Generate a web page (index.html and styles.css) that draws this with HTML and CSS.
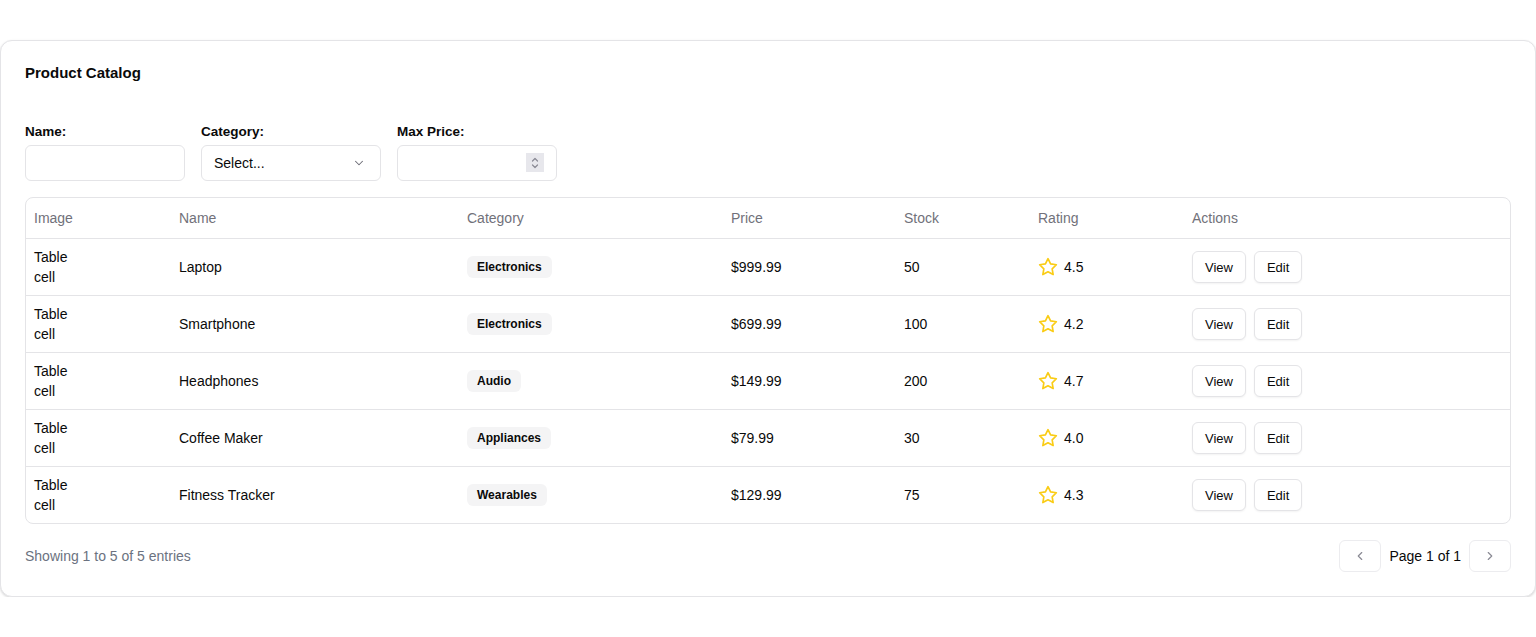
FILE: index.html
```html
<!DOCTYPE html>
<html lang="en">
<head>
<meta charset="utf-8">
<title>Product Catalog</title>
<link rel="stylesheet" href="styles.css">
</head>
<body>
<div class="card">
  <h2 class="title">Product Catalog</h2>
  <div class="filters">
    <div class="field">
      <label class="label">Name:</label>
      <input class="input w-name" type="text">
    </div>
    <div class="field">
      <label class="label">Category:</label>
      <div class="input select">
        <span>Select...</span>
        <svg class="chev" width="14" height="14" viewBox="0 0 24 24" fill="none" stroke="#6b6b75" stroke-width="1.8" stroke-linecap="round" stroke-linejoin="round"><path d="M6 9l6 6 6-6"/></svg>
      </div>
    </div>
    <div class="field">
      <label class="label">Max Price:</label>
      <div class="num-wrap">
        <input class="input w-price" type="text">
        <span class="spinner">
          <svg width="10" height="16" viewBox="0 0 10 16" fill="none" stroke="#8a8a94" stroke-width="1.2" stroke-linecap="round" stroke-linejoin="round"><path d="M2.5 6L5 3.5 7.5 6"/><path d="M2.5 10L5 12.5 7.5 10"/></svg>
        </span>
      </div>
    </div>
  </div>

  <div class="table-box">
    <table class="table">
      <colgroup>
        <col class="c-img"><col class="c-name"><col class="c-cat"><col class="c-price"><col class="c-stock"><col class="c-rating"><col>
      </colgroup>
      <thead>
        <tr><th>Image</th><th>Name</th><th>Category</th><th>Price</th><th>Stock</th><th>Rating</th><th>Actions</th></tr>
      </thead>
      <tbody>
        <tr>
          <td><div class="imgcell">Table cell</div></td><td>Laptop</td><td><span class="badge">Electronics</span></td><td>$999.99</td><td>50</td>
          <td><div class="rating"><svg class="star" width="20" height="20" viewBox="0 0 24 24" fill="none" stroke="#facc15" stroke-width="2" stroke-linejoin="round"><path d="M12 2l3.09 6.26L22 9.27l-5 4.87 1.18 6.88L12 17.77l-6.18 3.25L7 14.14 2 9.27l6.91-1.01L12 2z"/></svg>4.5</div></td>
          <td><div class="actions"><button class="btn">View</button><button class="btn">Edit</button></div></td>
        </tr>
        <tr>
          <td><div class="imgcell">Table cell</div></td><td>Smartphone</td><td><span class="badge">Electronics</span></td><td>$699.99</td><td>100</td>
          <td><div class="rating"><svg class="star" width="20" height="20" viewBox="0 0 24 24" fill="none" stroke="#facc15" stroke-width="2" stroke-linejoin="round"><path d="M12 2l3.09 6.26L22 9.27l-5 4.87 1.18 6.88L12 17.77l-6.18 3.25L7 14.14 2 9.27l6.91-1.01L12 2z"/></svg>4.2</div></td>
          <td><div class="actions"><button class="btn">View</button><button class="btn">Edit</button></div></td>
        </tr>
        <tr>
          <td><div class="imgcell">Table cell</div></td><td>Headphones</td><td><span class="badge">Audio</span></td><td>$149.99</td><td>200</td>
          <td><div class="rating"><svg class="star" width="20" height="20" viewBox="0 0 24 24" fill="none" stroke="#facc15" stroke-width="2" stroke-linejoin="round"><path d="M12 2l3.09 6.26L22 9.27l-5 4.87 1.18 6.88L12 17.77l-6.18 3.25L7 14.14 2 9.27l6.91-1.01L12 2z"/></svg>4.7</div></td>
          <td><div class="actions"><button class="btn">View</button><button class="btn">Edit</button></div></td>
        </tr>
        <tr>
          <td><div class="imgcell">Table cell</div></td><td>Coffee Maker</td><td><span class="badge">Appliances</span></td><td>$79.99</td><td>30</td>
          <td><div class="rating"><svg class="star" width="20" height="20" viewBox="0 0 24 24" fill="none" stroke="#facc15" stroke-width="2" stroke-linejoin="round"><path d="M12 2l3.09 6.26L22 9.27l-5 4.87 1.18 6.88L12 17.77l-6.18 3.25L7 14.14 2 9.27l6.91-1.01L12 2z"/></svg>4.0</div></td>
          <td><div class="actions"><button class="btn">View</button><button class="btn">Edit</button></div></td>
        </tr>
        <tr>
          <td><div class="imgcell">Table cell</div></td><td>Fitness Tracker</td><td><span class="badge">Wearables</span></td><td>$129.99</td><td>75</td>
          <td><div class="rating"><svg class="star" width="20" height="20" viewBox="0 0 24 24" fill="none" stroke="#facc15" stroke-width="2" stroke-linejoin="round"><path d="M12 2l3.09 6.26L22 9.27l-5 4.87 1.18 6.88L12 17.77l-6.18 3.25L7 14.14 2 9.27l6.91-1.01L12 2z"/></svg>4.3</div></td>
          <td><div class="actions"><button class="btn">View</button><button class="btn">Edit</button></div></td>
        </tr>
      </tbody>
    </table>
  </div>

  <div class="footer">
    <span class="showing">Showing 1 to 5 of 5 entries</span>
    <div class="pager">
      <button class="pbtn"><svg width="14" height="14" viewBox="0 0 24 24" fill="none" stroke="#8a8a94" stroke-width="2" stroke-linecap="round" stroke-linejoin="round"><path d="M15 18l-6-6 6-6"/></svg></button>
      <span class="pageinfo">Page 1 of 1</span>
      <button class="pbtn"><svg width="14" height="14" viewBox="0 0 24 24" fill="none" stroke="#8a8a94" stroke-width="2" stroke-linecap="round" stroke-linejoin="round"><path d="M9 18l6-6-6-6"/></svg></button>
    </div>
  </div>
</div>
</body>
</html>
```

FILE: styles.css
```css
* { box-sizing: border-box; }
html, body { margin: 0; padding: 0; background: #fff; }
body {
  padding-top: 40px;
  font-family: "Liberation Sans", Arial, sans-serif;
  font-size: 14px;
  line-height: 20px;
  color: #0a0a0a;
}
.card {
  width: 1536px;
  border: 1px solid #e4e4e7;
  border-radius: 12px;
  box-shadow: 0 1px 3px rgba(0,0,0,0.10), 0 1px 2px rgba(0,0,0,0.06);
  padding: 24px;
  background: #fff;
}
.title {
  margin: 0 0 40px 0;
  font-size: 15px;
  line-height: 16px;
  font-weight: 700;
}
.filters {
  display: flex;
  gap: 16px;
  margin-bottom: 16px;
}
.field { display: flex; flex-direction: column; }
.label {
  font-weight: 700;
  font-size: 13.5px;
  line-height: 20px;
  margin-top: 1px;
  margin-bottom: 3px;
}
.input {
  height: 36px;
  border: 1px solid #e4e4e7;
  border-radius: 6px;
  background: #fff;
  font: inherit;
  padding: 0 12px;
  outline: none;
}
.w-name { width: 160px; }
.w-price { width: 160px; }
.select {
  width: 180px;
  display: flex;
  align-items: center;
  justify-content: space-between;
  padding: 0 14px 0 12px;
  color: #0a0a0a;
}
.num-wrap { position: relative; width: 160px; }
.spinner {
  position: absolute;
  left: 129px;
  top: 8px;
  width: 18px;
  height: 19px;
  background: #e7e7ec;
  display: flex;
  align-items: center;
  justify-content: center;
}
.table-box {
  border: 1px solid #e4e4e7;
  border-radius: 8px;
  overflow: hidden;
}
.table {
  width: 100%;
  border-collapse: collapse;
  table-layout: fixed;
}
.c-img { width: 145px; }
.c-name { width: 288px; }
.c-cat { width: 264px; }
.c-price { width: 173px; }
.c-stock { width: 134px; }
.c-rating { width: 154px; }
th {
  text-align: left;
  font-weight: 400;
  color: #71717a;
  padding: 10px 8px;
  height: 40px;
  border-bottom: 1px solid #e4e4e7;
}
td {
  padding: 8px;
  height: 57px;
  vertical-align: middle;
  border-bottom: 1px solid #e4e4e7;
}
tbody tr:last-child td { border-bottom: none; height: 56px; }
.imgcell { width: 50px; }
.badge {
  display: inline-block;
  background: #f4f4f5;
  border-radius: 6px;
  padding: 3px 10px;
  font-size: 12px;
  line-height: 16px;
  font-weight: 700;
}
.rating { display: flex; align-items: center; gap: 6px; }
.star { flex: none; }
.actions { display: flex; gap: 8px; }
.btn {
  height: 32px;
  padding: 0 12px;
  border: 1px solid #e4e4e7;
  border-radius: 6px;
  background: #fff;
  font-family: inherit;
  font-size: 13px;
  color: #0a0a0a;
  box-shadow: 0 1px 2px rgba(0,0,0,0.05);
}
.footer {
  display: flex;
  justify-content: space-between;
  align-items: center;
  margin-top: 16px;
}
.showing { color: #6b7280; }
.pager { display: flex; align-items: center; gap: 8px; }
.pbtn {
  width: 42px;
  height: 32px;
  border: 1px solid #ececef;
  border-radius: 6px;
  background: #fff;
  display: flex;
  align-items: center;
  justify-content: center;
  padding: 0;
}
.pageinfo { font-weight: 400; }
```
